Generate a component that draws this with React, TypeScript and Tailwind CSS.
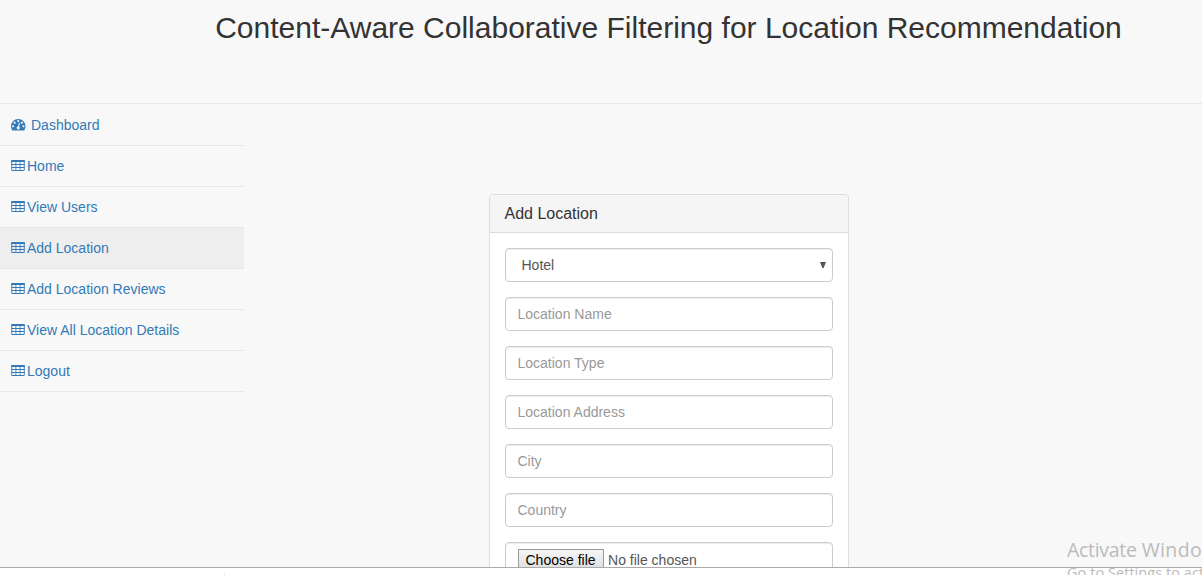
const items = ['Home', 'View Users', 'Add Location', 'Add Location Reviews', 'View All Location Details', 'Logout'];
const fields = ['Location Name', 'Location Type', 'Location Address', 'City', 'Country'];
const control = 'h-[34px] rounded border border-[#ccc] bg-white text-sm shadow-[inset_0_1px_1px_rgba(0,0,0,.075)]';

function DashboardIcon() {
  return (
    <svg viewBox="0 256 1792 1408" className="mt-px h-[11.5px] w-[14.5px] shrink-0" fill="currentColor" preserveAspectRatio="none">
      <path d="M384 1152q0-53-37.5-90.5t-90.5-37.5-90.5 37.5-37.5 90.5 37.5 90.5 90.5 37.5 90.5-37.5 37.5-90.5zm192-448q0-53-37.5-90.5t-90.5-37.5-90.5 37.5-37.5 90.5 37.5 90.5 90.5 37.5 90.5-37.5 37.5-90.5zm428 481l101-382q6-26-7.5-48.5t-38.5-29.5-48 6.5-30 39.5l-101 382q-60 5-107 43.5t-63 98.5q-20 77 20 146t117 89 146-20 89-117q16-60-6-117t-72-91zm660-33q0-53-37.5-90.5t-90.5-37.5-90.5 37.5-37.5 90.5 37.5 90.5 90.5 37.5 90.5-37.5 37.5-90.5zm-640-640q0-53-37.5-90.5t-90.5-37.5-90.5 37.5-37.5 90.5 37.5 90.5 90.5 37.5 90.5-37.5 37.5-90.5zm448 192q0-53-37.5-90.5t-90.5-37.5-90.5 37.5-37.5 90.5 37.5 90.5 90.5 37.5 90.5-37.5 37.5-90.5zm320 448q0 261-141 483-19 29-54 29h-1402q-35 0-54-29-141-221-141-483 0-182 71-348t191-286 286-191 348-71 348 71 286 191 191 286 71 348z" />
    </svg>
  );
}

function TableIcon() {
  return (
    <svg viewBox="0 0 14 11" className="mb-px h-[11px] w-3.5 shrink-0" fill="currentColor">
      <path d="M1 0h12q1 0 1 1v1H0V1q0-1 1-1z" />
      <path d="M.6 4h12.8v1H.6zM.6 7h12.8v1H.6zM.3 10h13.4q-.2 1-1 1H1.3q-.8 0-1-1z" />
      <path d="M.3 2h.9v8H.3zM4.5 2h.8v8h-.8zM8.7 2h.8v8h-.8zM12.8 2h.9v8h-.9z" />
    </svg>
  );
}

export default function App() {
  return (
    <div className="flex h-[575px] w-[1202px] flex-col overflow-hidden bg-white font-['Liberation_Sans',Arial,sans-serif] text-sm leading-5 text-[#333]">
      <div className="h-[567px] shrink-0 overflow-hidden bg-[#f8f8f8]">
        <header className="h-[104px] border-b border-[#e7e7e7] pt-[11px] pl-[135px] text-center">
          <h1 className="text-[30px] leading-[33px]">Content-Aware Collaborative Filtering for Location Recommendation</h1>
        </header>
        <div className="flex">
          <nav className="w-[244px] text-[#337ab7]">
            <a className="flex h-[42px] items-center gap-[5.5px] border-b border-[#e7e7e7] pl-[11px]">
              <DashboardIcon />
              Dashboard
            </a>
            {items.map((t) => (
              <a key={t} className={`flex h-[41px] items-center gap-0.5 border-b border-[#e7e7e7] pl-[11px] ${t === 'Add Location' ? 'bg-[#eee]' : ''}`}>
                <TableIcon />
                {t}
              </a>
            ))}
          </nav>
          <section className="mt-[90px] ml-[245px] w-[360px] rounded border border-[#ddd] bg-white">
            <h2 className="h-[38px] rounded-t-[3px] border-b border-[#ddd] bg-[#f5f5f5] pt-2.5 pl-[14.5px] text-base leading-[18px]">Add Location</h2>
            <div className="flex flex-col gap-[15px] p-[15px]">
              <div className={`${control} flex items-center justify-between pr-1.5 pl-[15.5px] text-[#555]`}>
                Hotel
                <svg className="h-1.5 w-1.5" viewBox="0 0 6 6" fill="currentColor">
                  <path d="M0 0h6L3.6 6H2.4z" />
                </svg>
              </div>
              {fields.map((t) => (
                <input key={t} placeholder={t} className={`${control} pr-3 pl-[11.5px] placeholder:text-[#999]`} />
              ))}
              <div className={`${control} flex items-start gap-1 px-3 pt-1.5 text-[#555]`}>
                <span className="h-[22px] border border-[#999] bg-linear-to-b from-[#f6f6f6] to-[#ddd] pr-[7.5px] pl-[6.5px] text-black">Choose file</span>
                <span className="pt-px">No file chosen</span>
              </div>
            </div>
          </section>
        </div>
      </div>
      <footer className="flex h-2 border-t border-[#aaa] bg-white pl-[224px]">
        <i className="mt-1.5 size-px bg-[#ccc]" />
      </footer>
      <div className="absolute top-[538px] left-[1067px] h-[37px] w-[135px] overflow-hidden whitespace-nowrap font-['Open_Sans',sans-serif] text-[#bbb]">
        <div className="flex gap-[5px] text-[19.5px] leading-6">
          <span className="tracking-[-0.3px]">Activate</span>
          <span className="tracking-[0.4px]">Windo</span>
        </div>
        <div className="mt-px text-[14.5px] leading-5 tracking-[0.05px]">Go to Settings to act</div>
      </div>
    </div>
  );
}
